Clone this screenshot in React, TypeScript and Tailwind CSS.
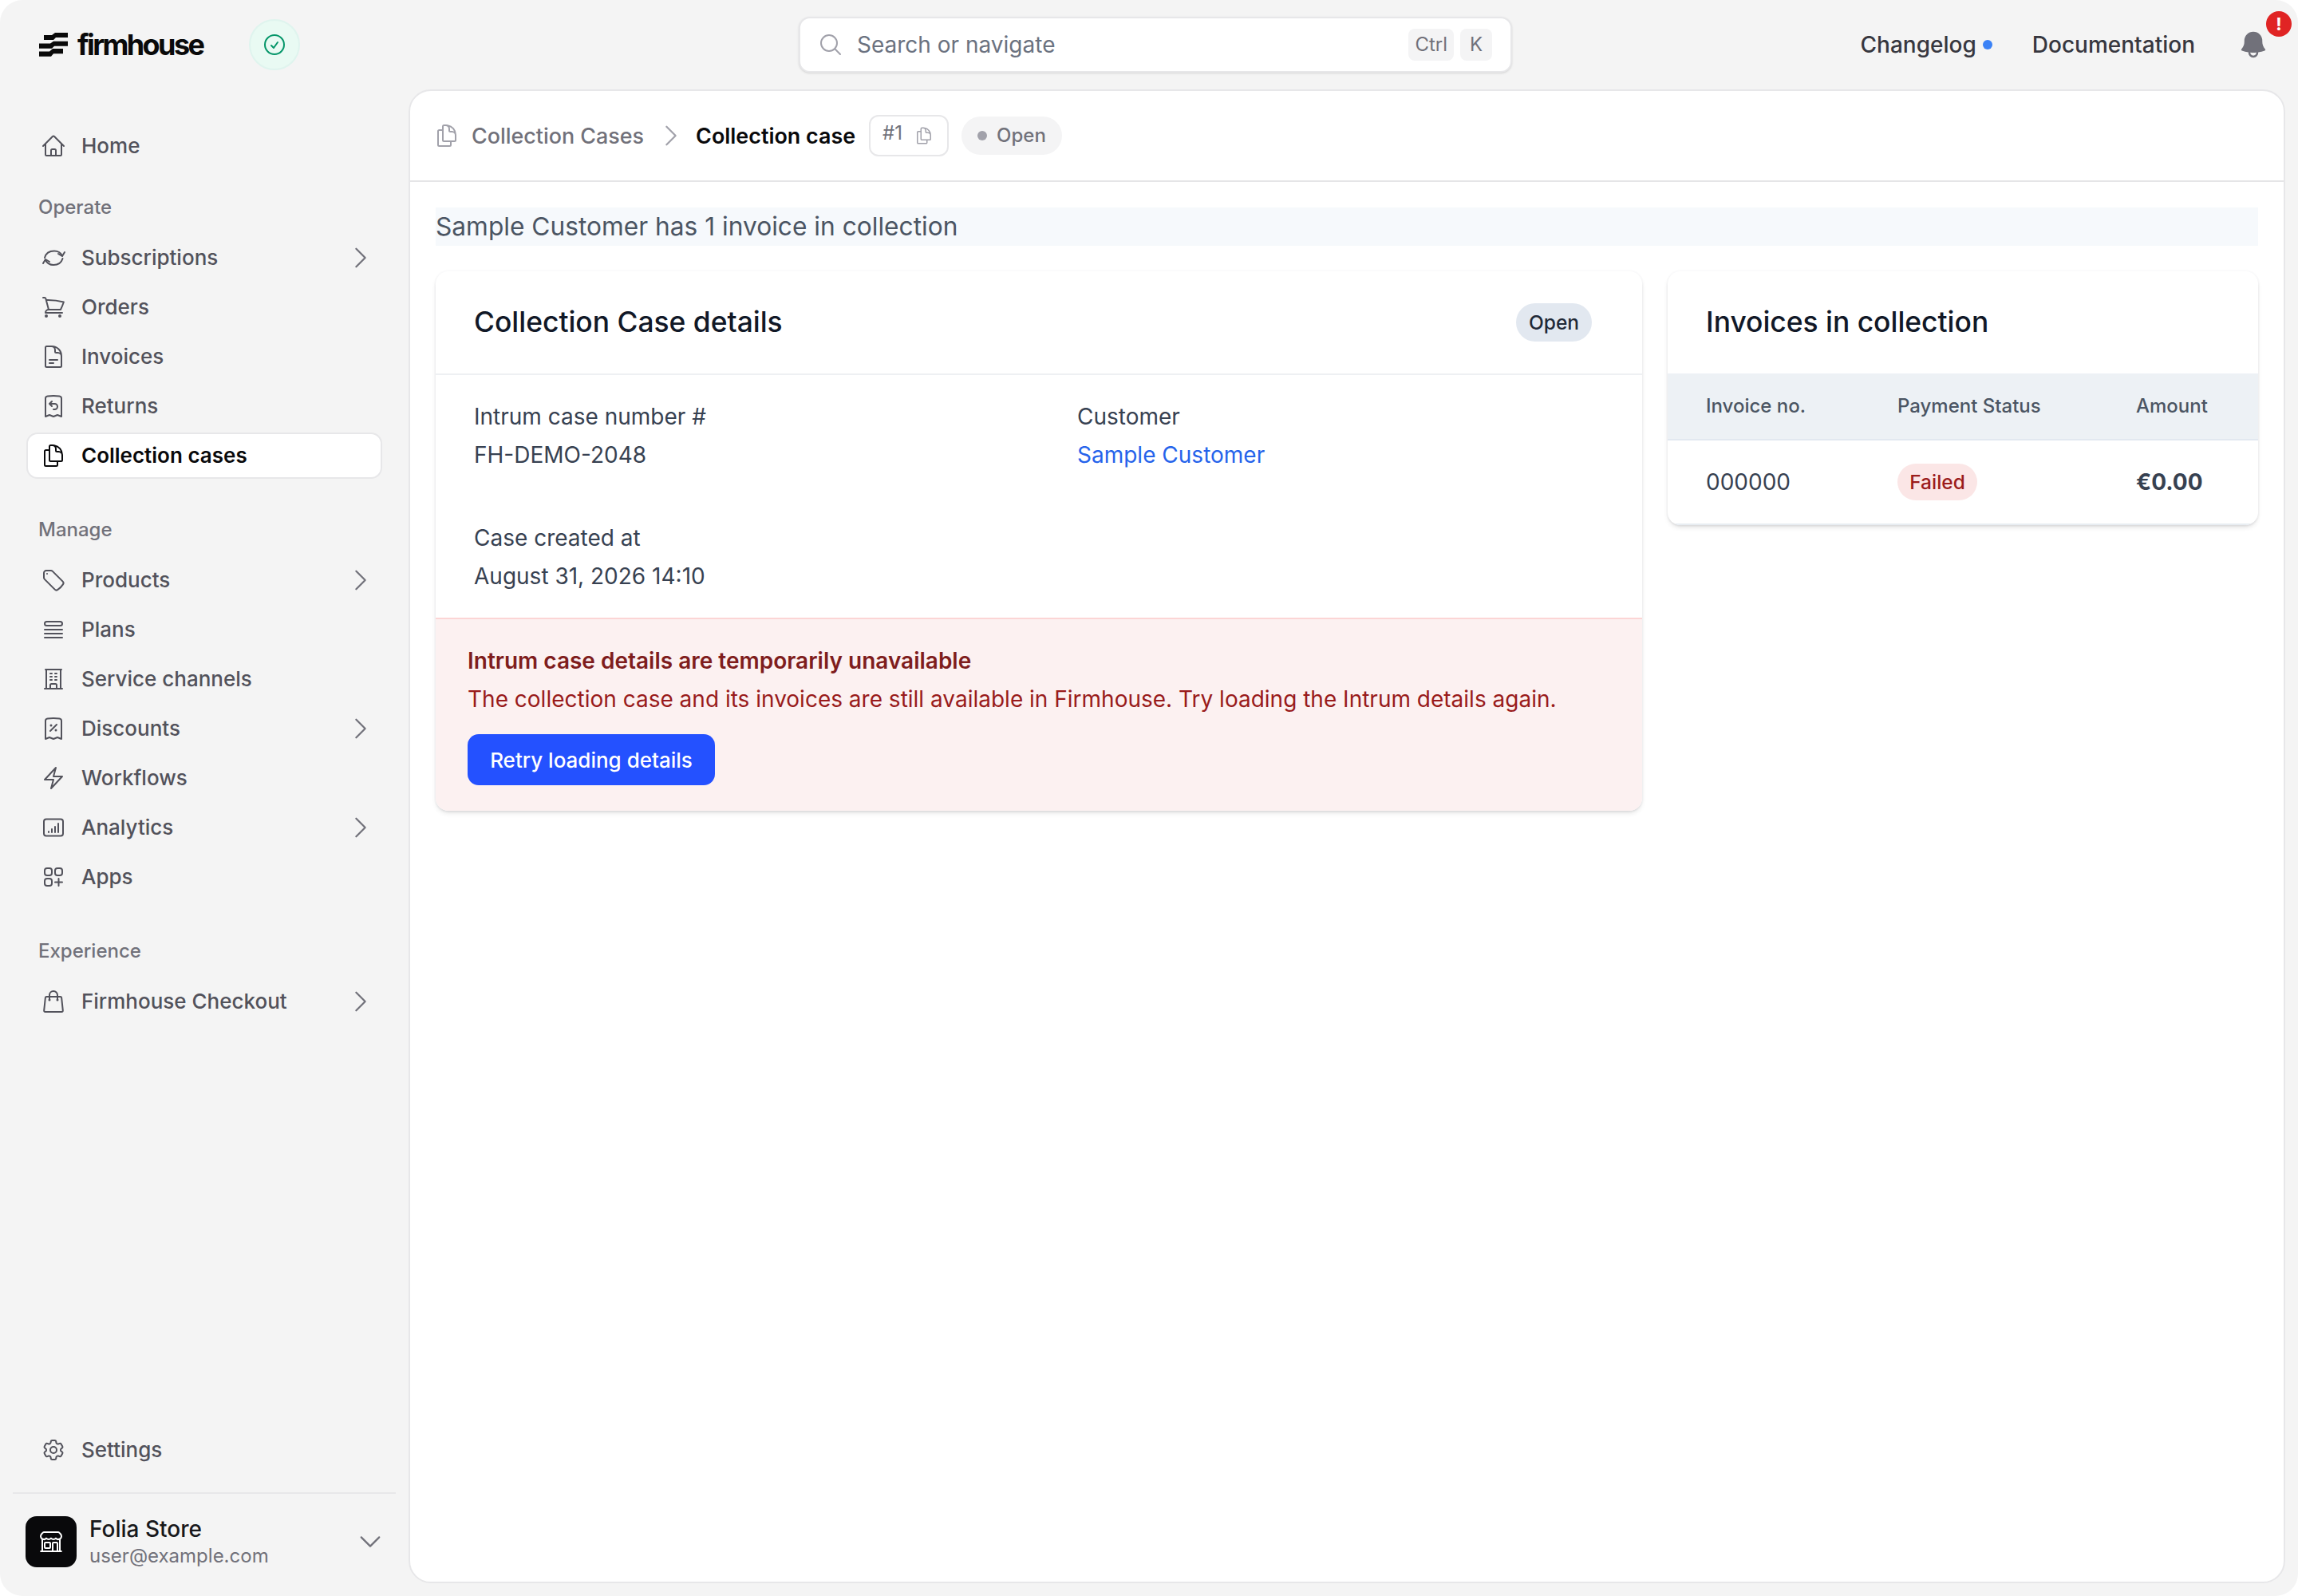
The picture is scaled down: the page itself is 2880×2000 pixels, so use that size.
import type { ReactNode } from "react";
import {
  HiOutlineHome,
  HiOutlineShoppingCart,
  HiOutlineDocumentText,
  HiOutlineReceiptRefund,
  HiOutlineDocumentDuplicate,
  HiOutlineTag,
  HiOutlineQueueList,
  HiOutlineBuildingOffice,
  HiOutlineReceiptPercent,
  HiOutlineBolt,
  HiOutlineSquaresPlus,
  HiOutlineShoppingBag,
  HiOutlineCog6Tooth,
  HiOutlineBuildingStorefront,
  HiOutlineMagnifyingGlass,
  HiOutlineChevronRight,
  HiOutlineChevronDown,
  HiOutlineCheckCircle,
  HiBell,
} from "react-icons/hi2";

function SubscriptionsIcon({ className }: { className?: string }) {
  return (
    <svg viewBox="0 0 32 32" fill="none" stroke="currentColor" strokeWidth="2" strokeLinecap="round" strokeLinejoin="round" className={className}>
      <path d="M5 16C6.500 10 11 7.500 17 7.500c4.500 0 8 2 10 6" />
      <path d="M30 9l-3 5-5-3" />
      <path d="M27.500 17C26 22 21.500 25 16 25c-4.500 0-8-2-10-6" />
      <path d="M3 23l3-5 5 3" />
    </svg>
  );
}

function AnalyticsIcon({ className }: { className?: string }) {
  return (
    <svg viewBox="0 0 32 32" fill="none" stroke="currentColor" strokeWidth="2" strokeLinecap="round" strokeLinejoin="round" className={className}>
      <rect x="4" y="5.500" width="24" height="21" rx="3" />
      <path d="M10 22v-1M14 22v-4M18 22v-7M22 22V11" />
    </svg>
  );
}

function LogoMark() {
  return (
    <svg viewBox="0 0 36 30" className="w-[36px] h-[30px] shrink-0" fill="#0a0a0a">
      <path d="M6 3h10l4-3h16v6H21l-3 3H6z" />
      <path d="M0 13.500h14l4-2.800h18v6H19l-3 3H0z" />
      <path d="M0 23.500h13l4-3.500h13v6.300H18l-3 3.500H0z" />
    </svg>
  );
}

const iconClass = "w-[32px] h-[32px] shrink-0";

function NavItem({ icon, label, chevron, active }: { icon: ReactNode; label: string; chevron?: boolean; active?: boolean }) {
  return (
    <div
      className={
        active
          ? "flex items-center h-[58px] -ml-[1px] pl-[16px] pr-[7px] rounded-[14px] bg-white border-2 border-[#e7e7e9] text-[#09090b] font-semibold"
          : "flex items-center h-[58px] pl-[17px] pr-[9px] text-[#52525b] font-medium"
      }
    >
      {icon}
      <span className="ml-[19px] text-[26px] leading-[40px]">{label}</span>
      {chevron && <HiOutlineChevronRight className="ml-auto w-[36px] h-[36px] text-[#71717a]" />}
    </div>
  );
}

function SectionLabel({ first, children }: { first?: boolean; children: ReactNode }) {
  return (
    <div className={first ? "mt-[28px] mb-[14px] pl-[14px] h-[40px] text-[24px] leading-[40px] font-medium text-[#71717a]" : "mt-[44px] mb-[14px] pl-[14px] h-[40px] text-[24px] leading-[40px] font-medium text-[#71717a]"}>
      {children}
    </div>
  );
}

const cardShadow = "shadow-[0_0_0_2px_rgba(15,23,42,0.015),0_4px_6px_-1px_rgba(0,0,0,0.1),0_2px_4px_-2px_rgba(0,0,0,0.1)]";

export default function App() {
  return (
    <div className="w-full h-[2000px] bg-white font-['Inter',sans-serif]">
      <div className="h-full flex flex-col rounded-[28px] bg-[#f4f4f4]">
        {/* top bar */}
        <header className="h-[112px] shrink-0 flex items-center pl-[49px] pr-[36px]">
          <LogoMark />
          <span className="ml-[12px] w-[159px] text-[36px] leading-none font-bold tracking-[-0.072em] text-[#0a0a0a]">firmhouse</span>
          <div className="ml-[56px] w-[64px] h-[64px] rounded-full bg-[#e9faf3] border-2 border-[#dff4ee] flex items-center justify-center">
            <HiOutlineCheckCircle className="w-[32px] h-[32px] text-[#059669]" />
          </div>
          <div className="ml-[625px] w-[894px] h-[70px] rounded-[14px] bg-white border-2 border-[#e7e7e9] shadow-sm flex items-center pl-[22px] pr-[23px]">
            <HiOutlineMagnifyingGlass className="w-[32px] h-[32px] text-[#a1a1aa]" />
            <span className="ml-[17px] text-[28px] text-[#6b7280]">Search or navigate</span>
            <span className="ml-auto h-[40px] px-[8px] rounded-[8px] bg-[#f4f4f5] text-[24px] leading-[40px] text-[#71717a]">Ctrl</span>
            <span className="ml-[8px] h-[40px] w-[40px] text-center rounded-[8px] bg-[#f4f4f5] text-[24px] leading-[40px] text-[#71717a]">K</span>
          </div>
          <span className="ml-auto text-[28px] font-medium text-[#37373f]">Changelog</span>
          <span className="ml-[8px] w-[12px] h-[12px] rounded-full bg-[#3b82f6]" />
          <span className="ml-[50px] text-[28px] font-medium text-[#37373f]">Documentation</span>
          <div className="relative ml-[53px]">
            <HiBell className="w-[40px] h-[40px] text-[#71717a]" />
            <span className="absolute -top-[22px] left-[36px] w-[32px] h-[32px] rounded-full bg-[#e02424] text-white text-[22px] leading-[32px] text-center font-bold">!</span>
          </div>
        </header>

        <div className="flex-1 flex min-h-0">
          {/* sidebar */}
          <aside className="w-[512px] shrink-0 flex flex-col pt-[42px] pb-[34px]">
            <div className="pl-[34px] pr-[33px]">
              <NavItem icon={<HiOutlineHome className={iconClass} />} label="Home" />
              <SectionLabel first>Operate</SectionLabel>
              <div className="flex flex-col gap-[4px]">
                <NavItem icon={<SubscriptionsIcon className={iconClass} />} label="Subscriptions" chevron />
                <NavItem icon={<HiOutlineShoppingCart className={iconClass} />} label="Orders" />
                <NavItem icon={<HiOutlineDocumentText className={iconClass} />} label="Invoices" />
                <NavItem icon={<HiOutlineReceiptRefund className={iconClass} />} label="Returns" />
                <NavItem icon={<HiOutlineDocumentDuplicate className={iconClass} />} label="Collection cases" active />
              </div>
              <SectionLabel>Manage</SectionLabel>
              <div className="flex flex-col gap-[4px]">
                <NavItem icon={<HiOutlineTag className={iconClass} />} label="Products" chevron />
                <NavItem icon={<HiOutlineQueueList className={iconClass} />} label="Plans" />
                <NavItem icon={<HiOutlineBuildingOffice className={iconClass} />} label="Service channels" />
                <NavItem icon={<HiOutlineReceiptPercent className={iconClass} />} label="Discounts" chevron />
                <NavItem icon={<HiOutlineBolt className={iconClass} />} label="Workflows" />
                <NavItem icon={<AnalyticsIcon className={iconClass} />} label="Analytics" chevron />
                <NavItem icon={<HiOutlineSquaresPlus className={iconClass} />} label="Apps" />
              </div>
              <SectionLabel>Experience</SectionLabel>
              <NavItem icon={<HiOutlineShoppingBag className={iconClass} />} label="Firmhouse Checkout" chevron />
            </div>
            <div className="mt-auto pl-[34px] pr-[33px]">
              <NavItem icon={<HiOutlineCog6Tooth className={iconClass} />} label="Settings" />
            </div>
            <div className="mt-[24px] mx-[16px] w-[480px] border-t-2 border-[#e7e7e9] pt-[26px] pl-[16px] pr-[14px] flex items-center">
              <div className="w-[64px] h-[64px] rounded-[14px] bg-[#09090b] flex items-center justify-center">
                <HiOutlineBuildingStorefront className="w-[32px] h-[32px] text-white" />
              </div>
              <div className="ml-[16px] flex flex-col">
                <span className="text-[28px] leading-[36px] font-medium text-[#18181b]">Folia Store</span>
                <span className="text-[24px] leading-[32px] text-[#71717a]">user@example.com</span>
              </div>
              <HiOutlineChevronDown className="ml-auto w-[36px] h-[36px] text-[#71717a]" />
            </div>
          </aside>

          {/* main panel */}
          <main className="flex-1 min-w-0 mr-[16px] mb-[16px] bg-white rounded-[28px] border-2 border-[#e7e7e9]">
            <div className="h-[114px] border-b-2 border-[#e5e5e7] flex items-center pl-[30px]">
              <HiOutlineDocumentDuplicate className="w-[32px] h-[32px] text-[#a1a1aa]" />
              <span className="ml-[15px] text-[26.9px] font-medium text-[#71717a]">Collection Cases</span>
              <HiOutlineChevronRight className="ml-[16px] w-[36px] h-[36px] text-[#a1a1aa]" />
              <span className="ml-[13px] text-[26.9px] font-semibold text-[#09090b]">Collection case</span>
              <div className="ml-[17px] h-[52px] w-[100px] rounded-[12px] border-2 border-[#e7e7e9] flex items-center pl-[15px]">
                <span className="text-[24px] text-[#71717a] -mt-[6px]">#1</span>
                <HiOutlineDocumentDuplicate className="ml-[15px] w-[24px] h-[24px] text-[#a1a1aa]" />
              </div>
              <div className="ml-[16px] h-[48px] w-[126px] rounded-full bg-[#f4f4f5] flex items-center pl-[20px]">
                <span className="w-[12px] h-[12px] rounded-full bg-[#a1a1aa]" />
                <span className="ml-[12px] text-[24px] font-medium text-[#71717a]">Open</span>
              </div>
            </div>

            <div className="px-[32px] pt-[32px]">
              <div className="h-[48px] bg-[#f6f9fc] text-[31.7px] leading-[48px] text-[#4b5563]">Sample Customer has 1 invoice in collection</div>

              <div className="mt-[32px] flex items-start gap-[32px]">
                {/* left card */}
                <section className={`w-[1512px] rounded-[16px] bg-white overflow-hidden ${cardShadow}`}>
                  <div className="h-[130px] border-b-2 border-[#eef0f3] flex items-center px-[48px]">
                    <h2 className="text-[35.4px] font-medium text-[#111827]">Collection Case details</h2>
                    <span className="ml-auto mr-[15px] h-[48px] w-[95px] rounded-full bg-[#e2e8f0] text-[24.5px] leading-[48px] text-center font-medium text-[#1f2937]">Open</span>
                  </div>
                  <div className="grid grid-cols-[756px_1fr] pl-[48px] pt-[28px] h-[304px] content-start text-[28px] leading-[48px] text-[#374151]">
                    <div>
                      <div>Intrum case number #</div>
                      <div>FH-DEMO-2048</div>
                    </div>
                    <div>
                      <div>Customer</div>
                      <div className="text-[#2563eb]">Sample Customer</div>
                    </div>
                    <div className="mt-[56px]">
                      <div>Case created at</div>
                      <div>August 31, 2026 14:10</div>
                    </div>
                  </div>
                  <div className="border-t-2 border-[#fcd5d5] bg-[#fcf1f1] h-[242px] pl-[40px] pt-[28px]">
                    <div className="text-[28px] leading-[48px] font-semibold text-[#7f1d1d]">Intrum case details are temporarily unavailable</div>
                    <div className="text-[28px] leading-[48px] text-[#991b1b]">The collection case and its invoices are still available in Firmhouse. Try loading the Intrum details again.</div>
                    <button className="mt-[20px] h-[64px] w-[310px] rounded-[14px] bg-[#2451ff] text-white text-[26px] font-medium">Retry loading details</button>
                  </div>
                </section>

                {/* right card */}
                <section className={`flex-1 rounded-[16px] bg-white overflow-hidden ${cardShadow}`}>
                  <div className="h-[128px] flex items-center px-[48px]">
                    <h2 className="text-[35.4px] font-medium text-[#111827]">Invoices in collection</h2>
                  </div>
                  <div className="h-[84px] bg-[#edf1f5] border-b-2 border-[#e2e8f0] flex items-center text-[24px] font-medium text-[#4b5563]">
                    <span className="w-[288px] pl-[48px]">Invoice no.</span>
                    <span className="w-[299px]">Payment Status</span>
                    <span>Amount</span>
                  </div>
                  <div className="h-[106px] border-b-2 border-[#e8edf2] flex items-center text-[28px] text-[#374151]">
                    <span className="w-[288px] pl-[48px]">000000</span>
                    <div className="w-[299px]">
                      <span className="inline-block h-[46px] w-[100px] rounded-full bg-[#fbe6e6] text-[24.5px] leading-[46px] text-center font-medium text-[#9b1c1c]">Failed</span>
                    </div>
                    <span className="font-bold">€0.00</span>
                  </div>
                </section>
              </div>
            </div>
          </main>
        </div>
      </div>
    </div>
  );
}
